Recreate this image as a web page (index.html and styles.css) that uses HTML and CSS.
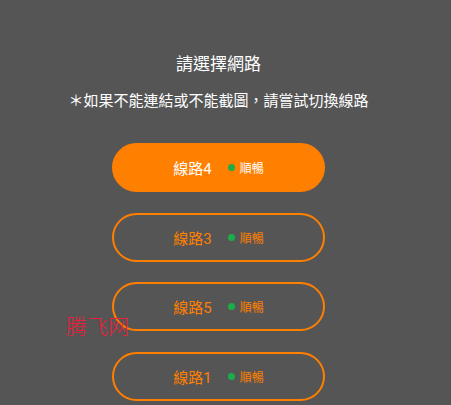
FILE: index.html
```html
<!DOCTYPE html>
<html lang="zh-Hant">
<head>
  <meta charset="UTF-8" />
  <meta name="viewport" content="width=device-width, initial-scale=1.0" />
  <title>請選擇網路</title>
  <link rel="stylesheet" href="styles.css">
</head>
<body>
  <div class="page">
    <h1 class="title">請選擇網路</h1>
    <p class="notice">＊如果不能連結或不能截圖，請嘗試切換線路</p>
    <div class="lines">
      <a class="line-btn active" href="#">
        <span class="line-name">線路4</span>
        <span class="dot"></span>
        <span class="status">順暢</span>
      </a>
      <a class="line-btn" href="#">
        <span class="line-name">線路3</span>
        <span class="dot"></span>
        <span class="status">順暢</span>
      </a>
      <a class="line-btn" href="#">
        <span class="line-name">線路5</span>
        <span class="dot"></span>
        <span class="status">順暢</span>
      </a>
      <a class="line-btn" href="#">
        <span class="line-name">線路1</span>
        <span class="dot"></span>
        <span class="status">順暢</span>
      </a>
    </div>
    <div class="watermark">腾飞网</div>
  </div>
</body>
</html>
```

FILE: styles.css
```css
* {
  margin: 0;
  padding: 0;
  box-sizing: border-box;
  font-family: Roboto, 'Noto Sans CJK TC', sans-serif;
}

html, body {
  background-color: #555555;
  height: 100%;
  overflow: hidden;
}

.page {
  position: relative;
  width: 437px;
  padding-top: 52px;
  display: flex;
  flex-direction: column;
  align-items: center;
  color: #ffffff;
}

.title {
  font-size: 17px;
  font-weight: 400;
  line-height: 24px;
}

.notice {
  margin-top: 14px;
  font-size: 15px;
  line-height: 22px;
}

.lines {
  margin-top: 31px;
  display: flex;
  flex-direction: column;
  gap: 20.5px;
}

.line-btn {
  width: 213px;
  height: 49px;
  border: 2px solid #ff7f00;
  border-radius: 25px;
  display: flex;
  align-items: center;
  justify-content: center;
  color: #ff7f00;
  text-decoration: none;
}

.line-btn.active {
  background: #ff7f00;
  color: #ffffff;
}

.line-name {
  font-size: 15px;
}

.dot {
  width: 7px;
  height: 7px;
  border-radius: 50%;
  background: #1aad48;
  margin-left: 16px;
  margin-right: 5px;
}

.status {
  font-size: 12px;
}

.watermark {
  position: absolute;
  left: 66px;
  top: 313px;
  font-family: 'Noto Sans CJK SC', serif;
  font-size: 21px;
  font-weight: 300;
  color: #e8203a;
  line-height: 24px;
}
```
